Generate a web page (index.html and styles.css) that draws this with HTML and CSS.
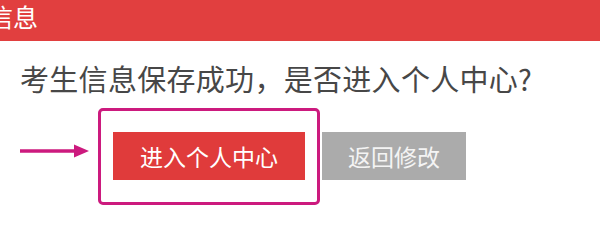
FILE: index.html
```html
<!DOCTYPE html>
<html lang="zh-CN">
<head>
<meta charset="utf-8">
<link rel="stylesheet" href="styles.css">
</head>
<body>
<div class="dialog">
  <div class="header"><span class="title">信息</span></div>
  <div class="message">考生信息保存成功，是否进入个人中心?</div>
  <div class="actions">
    <svg class="arrow" width="70" height="16" viewBox="0 0 70 16">
      <line x1="0" y1="8" x2="56" y2="8" stroke="#cc1a7e" stroke-width="3.5"/>
      <polygon points="54,1.5 69,8 54,14.5" fill="#cc1a7e"/>
    </svg>
    <div class="highlight">
      <button class="btn btn-primary">进入个人中心</button>
    </div>
    <button class="btn btn-secondary">返回修改</button>
  </div>
</div>
</body>
</html>
```
FILE: styles.css
```css
html, body {
  margin: 0;
  padding: 0;
  background: #ffffff;
}
body {
  font-family: "Noto Sans CJK SC", "Noto Sans", sans-serif;
  width: 600px;
  height: 208px;
  overflow: hidden;
}
.header {
  height: 41px;
  background: #e13f3f;
  display: flex;
  align-items: center;
  overflow: hidden;
}
.title {
  color: #ffffff;
  font-size: 25px;
  line-height: 30px;
  margin-left: -12px;
  margin-top: -10px;
}
.message {
  margin-top: 19px;
  padding-left: 20px;
  font-size: 29px;
  line-height: 36px;
  color: #474747;
  letter-spacing: 0.3px;
}
.actions {
  margin-top: 12px;
  display: flex;
  align-items: flex-start;
}
.arrow {
  margin-left: 20px;
  margin-top: 35px;
  margin-right: 8px;
}
.highlight {
  border: 3px solid #cc1a7e;
  border-radius: 5px;
  padding: 21px 12px 22px 12px;
  display: flex;
}
.btn {
  border: none;
  font-family: "Noto Sans CJK SC", "Noto Sans", sans-serif;
  font-size: 23px;
  color: #ffffff;
  height: 48px;
  padding: 0;
  margin: 0;
}
.btn-primary {
  width: 192px;
  background: #e03b3b;
}
.btn-secondary {
  width: 144px;
  background: #ababab;
  margin-left: 2px;
  margin-top: 24px;
  color: #f4f4f4;
}
```
